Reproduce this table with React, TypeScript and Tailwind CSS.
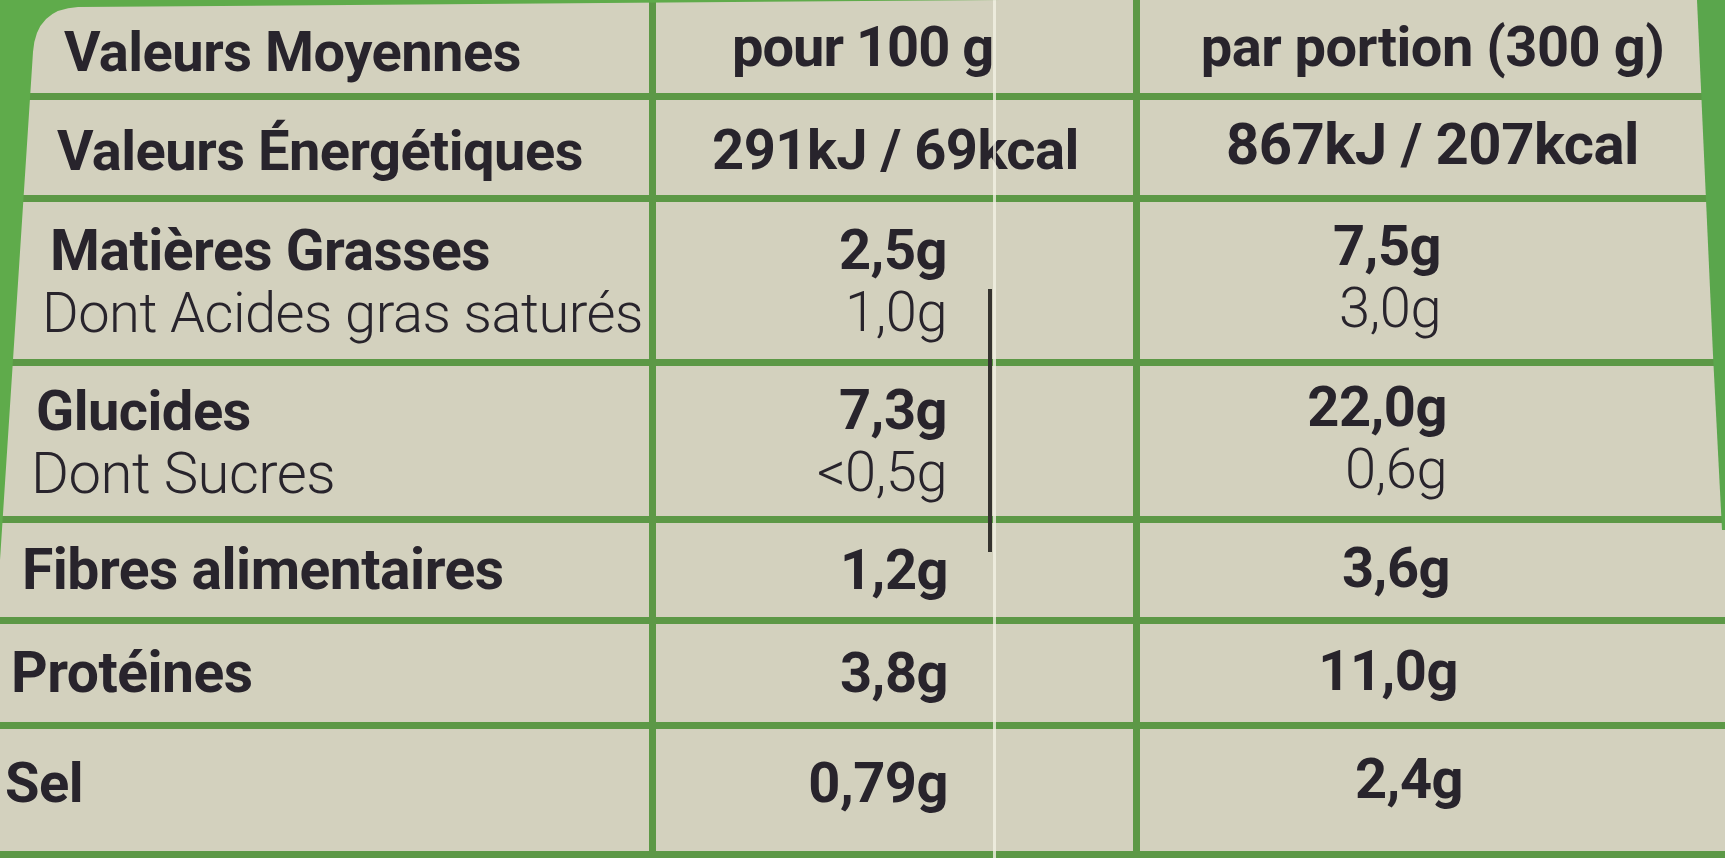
import React from "react";

const labelFont = "font-['Roboto',_'Liberation_Sans',_sans-serif]";

const Bold = ({ children, className = "" }: { children: React.ReactNode; className?: string }) => (
  <span className={`block font-bold text-[56px] leading-[62px] tracking-[-0.5px] ${className}`}>{children}</span>
);

const Light = ({ children, className = "" }: { children: React.ReactNode; className?: string }) => (
  <span className={`block font-light text-[56px] leading-[62px] tracking-[-0.5px] ${className}`}>{children}</span>
);

const cellLeft = "border-r-[7px] border-[#5c9846] flex flex-col justify-center";
const cellMid = "border-r-[7px] border-[#5c9846] flex flex-col justify-center";
const cellRight = "flex flex-col justify-center";

export default function App() {
  return (
    <div className={`relative w-[1725px] h-[858px] overflow-hidden bg-[#d3d1be] text-[#28242c] ${labelFont}`}>
      <div className="grid grid-cols-[656px_484px_1fr] grid-rows-[100px_102px_164px_157px_101px_105px_129px] h-full">
        {/* en-tête */}
        <div className={`${cellLeft} border-b-[7px] pl-[64px] pt-[10px]`}>
          <Bold className="text-[54px]">Valeurs Moyennes</Bold>
        </div>
        <div className={`${cellMid} border-b-[7px] pl-[76px]`}>
          <Bold className="text-[52px] tracking-[-1px]">pour 100 g</Bold>
        </div>
        <div className={`${cellRight} border-b-[7px] border-[#5c9846] items-center`}>
          <Bold className="text-[56px]">par portion (300 g)</Bold>
        </div>

        {/* énergie */}
        <div className={`${cellLeft} border-b-[7px] pl-[57px] pt-[6px]`}>
          <Bold>Valeurs Énergétiques</Bold>
        </div>
        <div className={`${cellMid} border-b-[7px] pl-[56px] pt-[4px]`}>
          <Bold className="text-[56px]">291kJ / 69kcal</Bold>
        </div>
        <div className={`${cellRight} border-b-[7px] border-[#5c9846] items-center pb-[8px]`}>
          <Bold className="text-[58px]">867kJ / 207kcal</Bold>
        </div>

        {/* matières grasses */}
        <div className={`${cellLeft} border-b-[7px] pt-[2px]`}>
          <Bold className="pl-[50px] text-[57px]">Matières Grasses</Bold>
          <Light className="pl-[42px]">Dont Acides gras saturés</Light>
        </div>
        <div className={`${cellMid} border-b-[7px] items-end pr-[186px]`}>
          <Bold>2,5g</Bold>
          <Light>1,0g</Light>
        </div>
        <div className={`${cellRight} border-b-[7px] border-[#5c9846] items-end pr-[284px] pb-[8px]`}>
          <Bold>7,5g</Bold>
          <Light>3,0g</Light>
        </div>

        {/* glucides */}
        <div className={`${cellLeft} border-b-[7px] pt-[2px]`}>
          <Bold className="pl-[36px]">Glucides</Bold>
          <Light className="pl-[31px] text-[58px]">Dont Sucres</Light>
        </div>
        <div className={`${cellMid} border-b-[7px] items-end pr-[186px]`}>
          <Bold>7,3g</Bold>
          <Light>&lt;0,5g</Light>
        </div>
        <div className={`${cellRight} border-b-[7px] border-[#5c9846] items-end pr-[278px] pb-[6px]`}>
          <Bold>22,0g</Bold>
          <Light>0,6g</Light>
        </div>

        {/* fibres */}
        <div className={`${cellLeft} border-b-[7px] pl-[22px]`}>
          <Bold className="text-[57px]">Fibres alimentaires</Bold>
        </div>
        <div className={`${cellMid} border-b-[7px] items-end pr-[185px]`}>
          <Bold>1,2g</Bold>
        </div>
        <div className={`${cellRight} border-b-[7px] border-[#5c9846] items-end pr-[275px] pb-[4px]`}>
          <Bold>3,6g</Bold>
        </div>

        {/* protéines */}
        <div className={`${cellLeft} border-b-[7px] pl-[11px]`}>
          <Bold className="text-[57px]">Protéines</Bold>
        </div>
        <div className={`${cellMid} border-b-[7px] items-end pr-[185px]`}>
          <Bold>3,8g</Bold>
        </div>
        <div className={`${cellRight} border-b-[7px] border-[#5c9846] items-end pr-[267px] pb-[4px]`}>
          <Bold>11,0g</Bold>
        </div>

        {/* sel */}
        <div className={`${cellLeft} border-b-[7px] pl-[5px] pb-[14px]`}>
          <Bold>Sel</Bold>
        </div>
        <div className={`${cellMid} border-b-[7px] items-end pr-[185px] pb-[14px]`}>
          <Bold>0,79g</Bold>
        </div>
        <div className={`${cellRight} border-b-[7px] border-[#5c9846] items-end pr-[262px] pb-[22px]`}>
          <Bold>2,4g</Bold>
        </div>
      </div>

      {/* pli du carton */}
      <div className="absolute top-0 bottom-0 left-[993px] w-[3px] bg-[#f3f1e4]/80" />
      <div className="absolute top-[289px] h-[263px] left-[988px] w-[4px] bg-[#35332f]" />

      {/* bords verts du paquet */}
      <svg className="absolute inset-0 pointer-events-none" width="1725" height="858" viewBox="0 0 1725 858">
        <path d="M0 0 H1000 L78 7 Q36 9 33 52 L0 560 Z" fill="#5fab4b" />
        <path d="M1697 0 H1725 V530 H1722 L1713 355 Z" fill="#5aa64c" />
      </svg>
    </div>
  );
}
